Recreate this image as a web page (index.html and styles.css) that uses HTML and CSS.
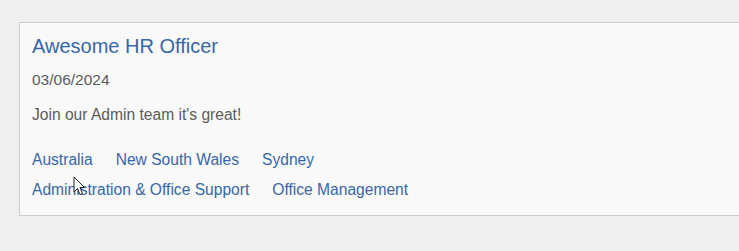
FILE: index.html
```html
<!DOCTYPE html>
<html lang="en">

<head>
    <meta charset="UTF-8">
    <meta name="viewport" content="width=device-width, initial-scale=1.0">
    <link rel="stylesheet" href="styles.css">
    <title>Jobs</title>
</head>

<body>
    <div class="job-card">
        <a href="javascript:;" class="job-title">Awesome HR Officer</a>
        <div class="job-date">03/06/2024</div>
        <p class="job-summary">Join our Admin team it's great!</p>
        <ul class="job-tags">
            <li><a href="javascript:;">Australia</a></li>
            <li><a href="javascript:;">New South Wales</a></li>
            <li><a href="javascript:;">Sydney</a></li>
        </ul>
        <ul class="job-tags">
            <li><a href="javascript:;">Administration &amp; Office Support</a></li>
            <li><a href="javascript:;">Office Management</a></li>
        </ul>
    </div>
    <svg class="cursor" width="13" height="20" viewBox="0 0 13 20">
        <path d="M1 1 L1 16 L4.5 12.5 L7 18.5 L9.5 17.5 L7 11.5 L11.5 11.5 Z" fill="#fff" stroke="#222" stroke-width="1" />
    </svg>
</body>

</html>
```

FILE: styles.css
```css
body {
    margin: 0;
    background-color: #efefef;
    font-family: "Liberation Sans", Arial, sans-serif;
    overflow: hidden;
}

a {
    text-decoration: none;
    color: #3767a6;
}

.job-card {
    margin: 22px -20px 0 19px;
    padding: 10px 12px 10px 12px;
    background-color: #f9f9f9;
    border: 1px solid #cfcfcf;
    box-shadow: 0 1px 1px #dcdcdc;
}

.job-title {
    display: block;
    font-size: 20px;
    line-height: 26px;
}

.job-date {
    margin-top: 11px;
    font-size: 15.5px;
    line-height: 20px;
    color: #5b5b5b;
}

.job-summary {
    margin: 15px 0 20px 0;
    font-size: 15.6px;
    line-height: 20px;
    color: #5b5b5b;
}

.job-tags {
    display: flex;
    gap: 23px;
    margin: 0;
    padding: 0;
    list-style: none;
    font-size: 15.6px;
    line-height: 30px;
}

.cursor {
    position: absolute;
    left: 73px;
    top: 176px;
}
```
